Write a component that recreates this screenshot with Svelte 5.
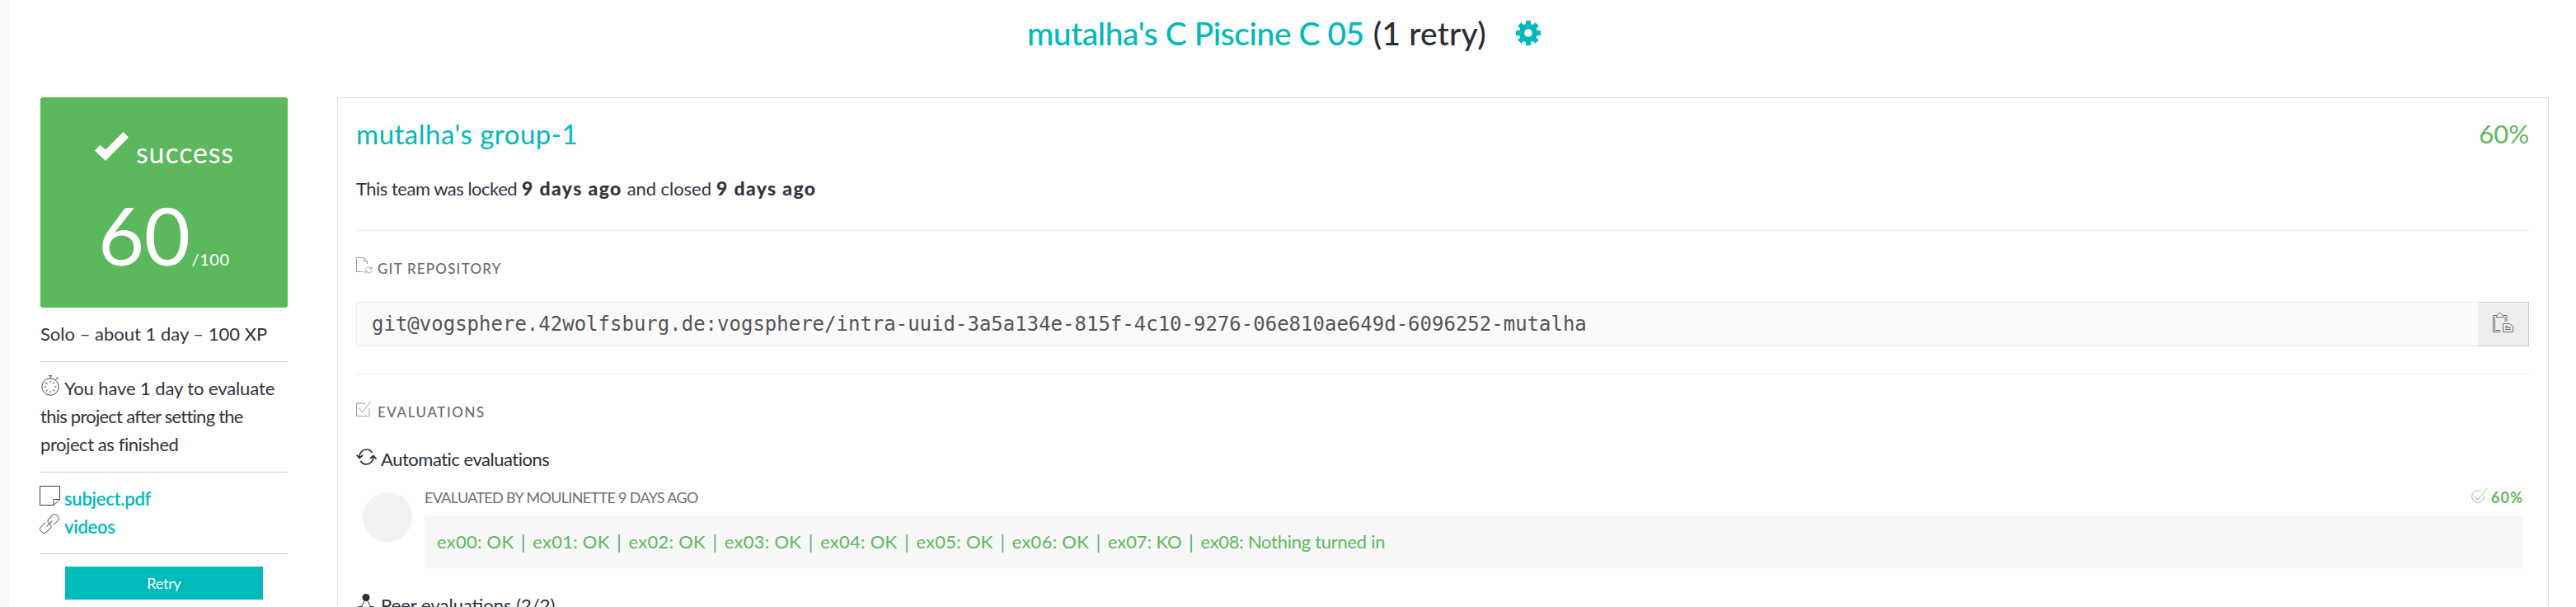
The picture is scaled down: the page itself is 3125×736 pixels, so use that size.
<script>
  const results = [
    { text: 'ex00: OK', kind: 'ok' },
    { text: 'ex01: OK', kind: 'ok' },
    { text: 'ex02: OK', kind: 'ok' },
    { text: 'ex03: OK', kind: 'ok' },
    { text: 'ex04: OK', kind: 'ok' },
    { text: 'ex05: OK', kind: 'ok' },
    { text: 'ex06: OK', kind: 'ok' },
    { text: 'ex07: KO', kind: 'ko' },
    { text: 'ex08: Nothing turned in', kind: 'none' }
  ];
  const ticks = [0, 45, 90, 135, 180, 225, 270, 315];
</script>

<div class="page">
  <div class="rail"></div>
  <main>
    <header>
      <h1><a class="project" href="#project">mutalha's C Piscine C 05</a><span>(1 retry)</span></h1>
      <svg class="gear" viewBox="0 0 30 30" width="30" height="30">
        <g fill="#00babc">
          {#each ticks as a}
            <rect x="12" y="0" width="6" height="8" transform="rotate({a} 15 15)" />
          {/each}
        </g>
        <circle cx="15" cy="15" r="8" fill="none" stroke="#00babc" stroke-width="6.4" />
      </svg>
    </header>

    <div class="body">
      <aside>
        <div class="score">
          <div class="status">
            <svg viewBox="0 0 41 36" width="41" height="36"><path d="M0 22.5 6.5 16 13 21.5 34.500 0 41 6.500 13 35Z" fill="#fff" /></svg>
            <span>success</span>
          </div>
          <div class="mark"><span class="num">60</span><span class="max">/100</span></div>
        </div>
        <p class="solo">Solo – about 1 day – 100 XP</p>
        <hr />
        <p class="notice">
          <span class="l1"><svg viewBox="0 0 22 25" width="22" height="25" fill="none" stroke="#4c4c55">
            <circle cx="11" cy="14" r="10.200" /><path d="M9 .7h4M11 1v3M17.500 5.500l2.500-2.500M18.500 2l2.500 2.500" />
            {#each ticks as a}<path d="M11 6.500v2.500" transform="rotate({a} 11 14)" />{/each}
          </svg>You have 1 day to evaluate</span>
          <span class="l2">this project after setting the</span>
          <span class="l3">project as finished</span>
        </p>
        <hr />
        <ul>
          <li><svg viewBox="0 0 25 24" width="25" height="24" fill="none" stroke="#3f3f48"><path d="M.5.500h24v16l-7.500 7H.5zM24.500 16.500H17v7" /></svg><a href="#subject">subject.pdf</a></li>
          <li><svg class="link" viewBox="0 0 24 24" width="24" height="24" fill="none" stroke="#65656d"><g transform="rotate(-45 12 12)"><path d="M9 7.500H1.500a3 3 0 0 0-3 3v3a3 3 0 0 0 3 3H9a3 3 0 0 0 3-3v-1M15 16.500h7.500a3 3 0 0 0 3-3v-3a3 3 0 0 0-3-3H15a3 3 0 0 0-3 3v1M7 12h10" /></g></svg><a href="#videos">videos</a></li>
        </ul>
        <hr />
        <button class="retry">Retry</button>
      </aside>

      <section>
        <div class="team">
          <h2>mutalha's group-1</h2>
          <span class="percent">60%</span>
        </div>
        <p class="locked"><span class="a">This team was locked</span><b>9 days ago</b><span class="c">and closed</span><b>9 days ago</b></p>
        <hr />
        <h3>
          <svg viewBox="0 0 20 20" width="20" height="20" fill="none" stroke="#a0a0a8"><path d="M9 17.500H.5V.500h9l4 4.500v3M9.500.500V5h4M11.500 14.500c.5-3 5-4 6.500-1M19 11v3h-3M19 16c-1 3.500-5.500 3.500-6.800 1M11.500 19.500v-3h3" /></svg>
          <span class="git">GIT REPOSITORY</span>
        </h3>
        <div class="repo">
          <div class="url">git@vogsphere.42wolfsburg.de:vogsphere/intra-uuid-3a5a134e-815f-4c10-9276-06e810ae649d-6096252-mutalha</div>
          <div class="copy">
            <svg viewBox="0 0 25 25" width="25" height="25" fill="none" stroke="#707070">
              <path d="M9.500 23.500H.5V3.500h4M13 3.500h4V11M9.500 21.500H2.500V5.500M15 5.500V11M4.500 5.800V3.500l2-1c.5-2.600 4-2.600 4.500 0l2 1v2.300z" />
              <path d="M12.500 13.500h8l4 3.500v6.500h-12zM15 16.500h4M15 18.500h7M15 20.500h7" />
            </svg>
          </div>
        </div>
        <hr class="second" />
        <h3>
          <svg viewBox="0 0 20 20" width="20" height="20" fill="none" stroke="#a0a0a8"><path d="M12 3H.5v15.500h15.500V9M3.500 9l4 5L17.500 1" /></svg>
          <span class="evals">EVALUATIONS</span>
        </h3>
        <h4>
          <svg viewBox="0 0 25 20" width="25" height="20" fill="none" stroke="#2d2d35" stroke-width="1.700"><path d="M4 11C3.500 5 8 1 12.500 1c3.500 0 5.500 1.500 7 4M21 9c.5 6-4 10-8.500 10-3.500 0-5.500-1.500-7-4M.7 7.500 4 11.500 8 8M17 12l4-3.500 3.500 4" /></svg>
          <span class="auto">Automatic evaluations</span>
        </h4>
        <div class="evaluation">
          <div class="avatar"></div>
          <div class="details">
            <div class="meta">
              <span class="by">EVALUATED BY MOULINETTE 9 DAYS AGO</span>
              <span class="final"><svg viewBox="0 0 20 20" width="20" height="20" fill="none" stroke="#8ccf8c"><path d="M11.500 4.700A7.300 7.300 0 1 0 15.300 11M4 11l4 4L19.500.700" /></svg><b>60%</b></span>
            </div>
            <div class="feedback">
              {#each results as r, i}{#if i > 0}<span class="bar">|</span>{/if}<span class={r.kind}>{r.text}</span>{/each}
            </div>
          </div>
        </div>
        <h4 class="peer">
          <svg viewBox="0 0 25 25" width="25" height="25" fill="none" stroke="#2d2d35"><circle cx="12" cy="4.500" r="4.500" fill="#2d2d35" stroke="none" /><path d="M10.500 8 6.500 15.500M13.500 8l4 7.500M2.500 15.500h5M16.500 15.500h5" /><path d="M1 24v-4a4 4 0 0 1 8 0v4M15 24v-4a4 4 0 0 1 8 0v4" /></svg>
          <span>Peer evaluations (2/2)</span>
        </h4>
      </section>
    </div>
  </main>
</div>

<style>
  :global(body) { margin: 0; background: #fff; }
  :where(h1, h2, h3, h4, p, ul) { margin: 0; padding: 0; font-weight: 400; list-style: none; }
  .page { display: flex; height: 736px; overflow: hidden; font-family: Lato, sans-serif; font-size: 22px; line-height: 34px; color: #33333c; white-space: nowrap; }
  svg { display: block; flex: none; }
  a { color: #00babc; text-decoration: none; }
  .rail { box-sizing: border-box; width: 11px; flex: none; background: #fafafa; border-right: 1px solid #f4f4f4; }
  main { flex: 1; min-width: 0; }
  header { display: flex; align-items: flex-start; height: 118px; padding-left: 1235px; }
  h1 { display: flex; gap: 11px; font-size: 39px; line-height: 81px; font-weight: 500; color: #2d2d38; }
  h1 span { letter-spacing: .2px; }
  .project { letter-spacing: -.45px; }
  .gear { margin: 25px 0 0 36px; }
  .body { display: flex; padding: 0 33px 0 38px; gap: 60px; }

  aside { width: 300px; flex: none; }
  .score { box-sizing: border-box; height: 255px; padding: 36px 0 0 66px; background: #5cb85c; border-radius: 3px; color: #fff; }
  .status { display: flex; gap: 9px; height: 60px; font-size: 34px; line-height: 62px; letter-spacing: .85px; }
  .status svg { margin-top: 6px; }
  .mark { display: flex; align-items: baseline; padding: 21px 0 0 4px; line-height: 100px; }
  .num { font-size: 97px; letter-spacing: -.5px; }
  .max { font-size: 20px; margin-left: 2px; letter-spacing: .6px; }
  aside hr { margin: 0; border: 0; height: 1px; background: #ccc; }
  .solo { padding: 15px 0 16px; }
  .notice { padding: 15px 0 16px; }
  .notice span { display: flex; }
  .notice svg { margin: 1px 6px 0 1px; }
  .notice .l1 { letter-spacing: -.1px; }
  .notice .l2 { letter-spacing: -.75px; }
  .notice .l3 { letter-spacing: -.43px; }
  ul { padding: 15px 0; }
  li { display: flex; font-weight: 600; letter-spacing: -.25px; }
  li svg { margin: 1px 5px 0 -1px; }
  li .link { margin: 1px 6px 0 -1px; }
  .retry { display: block; margin: 15px 30px 0; width: 240px; height: 40px; padding: 0; border: 0; background: #00babc; color: #fff; font: 18px/40px Lato, sans-serif; letter-spacing: -.2px; }

  section { box-sizing: border-box; flex: 1; min-width: 0; height: 700px; padding: 0 23px 0 22px; border: 1px solid #ddd; }
  .team { display: flex; justify-content: space-between; height: 86px; font-size: 33px; line-height: 86px; }
  h2 { font-size: 33px; color: #00babc; letter-spacing: .5px; }
  .percent { font-size: 31px; line-height: 87px; color: #5cb85c; }
  .locked { display: flex; gap: 6px; height: 47px; line-height: 47px; }
  .locked .a { letter-spacing: -.5px; }
  .locked b { font-size: 23px; font-weight: 900; letter-spacing: 1.350px; }
  .locked .c { letter-spacing: -.05px; }
  section hr { margin: 27px 0 0; border: 0; height: 1px; background: #eee; }
  section .second { margin-top: 33px; }
  h3 { display: flex; gap: 6px; height: 31px; padding: 30px 0 25px; font-size: 17px; line-height: 31px; font-weight: 500; color: #6b6b72; }
  h3 svg { margin-top: 2px; }
  .git { letter-spacing: 1.200px; }
  .evals { letter-spacing: 1.550px; }
  .repo { display: flex; height: 54px; }
  .url { box-sizing: border-box; flex: 1; padding-left: 18px; background: #fafafa; border: 1px solid #eee; border-right: 0; font: 24px/53px "DejaVu Sans Mono", monospace; color: #555; }
  .copy { box-sizing: border-box; width: 62px; padding: 12px 0 0 18px; background: #eee; border: 1px solid #ccc; border-left: 0; }
  h4 { display: flex; gap: 5px; height: 34px; color: #2d2d35; }
  h4 svg { margin-top: 4px; }
  .auto { letter-spacing: -.48px; }
  .evaluation { display: flex; gap: 15px; padding: 17px 7px 0 8px; }
  .avatar { flex: none; width: 60px; height: 60px; margin-top: 6px; border-radius: 50%; background: #f2f2f2; }
  .details { flex: 1; }
  .meta { display: flex; justify-content: space-between; height: 34px; font-size: 18px; line-height: 24px; color: #6f6f78; }
  .by { letter-spacing: -.67px; }
  .final { display: flex; gap: 4px; color: #5cb85c; }
  .final b { letter-spacing: 1.100px; }
  .feedback { display: flex; box-sizing: border-box; height: 64px; padding-left: 15px; line-height: 63px; background: #f7f7f7; border-radius: 4px; color: #5cb85c; }
  .bar { width: 23px; text-align: center; font-size: 24px; }
  .ok { letter-spacing: .25px; }
  .ko { letter-spacing: -.1px; }
  .none { letter-spacing: -.28px; }
  .peer { margin-top: 28px; }
  .peer svg { margin: 3px 0 0; }
</style>
